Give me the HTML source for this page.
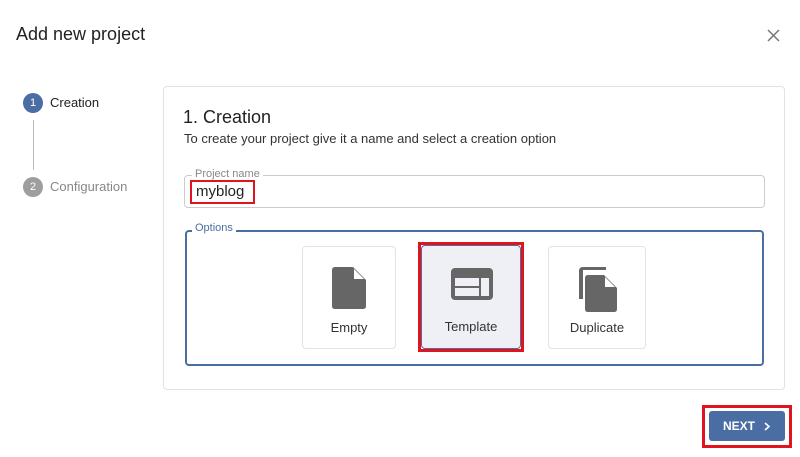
<!DOCTYPE html>
<html><head><style>
*{box-sizing:border-box;margin:0;padding:0}
body{width:800px;height:457px;background:#fff;font-family:"Liberation Sans",sans-serif;position:relative;overflow:hidden;color:#222}
.a{position:absolute}
.opt{position:absolute;top:246px;width:94px;height:103px;border:1px solid #e3e3e3;border-radius:4px;background:#fff}
.opt .lbl{position:absolute;top:73px;left:0;right:0;text-align:center;font-size:13px;color:#333}
.opt svg{position:absolute;left:27px;top:18px}
</style></head><body>
<div class="a" style="left:16px;top:24px;font-size:18px;color:#222">Add new project</div>
<svg class="a" style="left:767px;top:29px" width="13" height="13"><path d="M1 1L12 12M12 1L1 12" stroke="#777" stroke-width="1.5"/></svg>

<div class="a" style="left:23px;top:93px;width:20px;height:20px;border-radius:50%;background:#4a6ea3;color:#fff;font-size:11px;text-align:center;line-height:20px">1</div>
<div class="a" style="left:50px;top:95px;font-size:13px;color:#222">Creation</div>
<div class="a" style="left:33px;top:120px;width:1px;height:50px;background:#bbb"></div>
<div class="a" style="left:23px;top:177px;width:20px;height:20px;border-radius:50%;background:#9e9e9e;color:#fff;font-size:11px;text-align:center;line-height:20px">2</div>
<div class="a" style="left:50px;top:179px;font-size:13px;color:#888">Configuration</div>

<div class="a" style="left:163px;top:86px;width:622px;height:304px;border:1px solid #e2e2e2;border-radius:4px"></div>
<div class="a" style="left:183px;top:107px;font-size:18px;color:#222">1. Creation</div>
<div class="a" style="left:184px;top:131px;font-size:13px;color:#333">To create your project give it a name and select a creation option</div>

<div class="a" style="left:184px;top:175px;width:581px;height:33px;border:1px solid #ccc;border-radius:4px"></div>
<div class="a" style="left:192px;top:168px;font-size:11px;color:#888;background:#fff;padding:0 3px">Project name</div>
<div class="a" style="left:190px;top:180px;width:65px;height:24px;border:2px solid #e0141e"></div>
<div class="a" style="left:196px;top:183px;font-size:15px;color:#222">myblog</div>

<div class="a" style="left:185px;top:230px;width:579px;height:136px;border:2px solid #4a6ea3;border-radius:4px"></div>
<div class="a" style="left:192px;top:222px;font-size:11px;color:#4a6ea3;background:#fff;padding:0 3px">Options</div>

<div class="opt" style="left:302px"><svg width="40" height="46" viewBox="0 0 40 46"><path d="M5 2H23L36 15V41Q36 44 33 44H5Q2 44 2 41V5Q2 2 5 2Z" fill="#666"/><path d="M24 4L34 14H24Z" fill="#fff"/></svg><div class="lbl">Empty</div></div>
<div class="a" style="left:418px;top:242px;width:106px;height:110px;border:3px solid #e0141e"></div>
<div class="opt" style="left:421px;top:245px;width:100px;height:104px;background:#eef0f5;border-color:#4a6ea3"><svg style="left:28px;top:20px" width="44" height="36" viewBox="0 0 44 36"><rect x="1" y="2" width="42" height="32" rx="4" fill="#666"/><rect x="5" y="12" width="24" height="8" fill="#eef0f5"/><rect x="5" y="22" width="24" height="8" fill="#eef0f5"/><rect x="31" y="12" width="8" height="18" fill="#eef0f5"/></svg><div class="lbl">Template</div></div>
<div class="opt" style="left:548px;width:98px"><svg width="44" height="48" viewBox="0 0 44 48"><path d="M3 6Q3 2 7 2H30V5H7V34H3Z" fill="#666"/><path d="M12 10H28L41 23V44Q41 47 38 47H12Q9 47 9 44V13Q9 10 12 10Z" fill="#666"/><path d="M29 12L39 22H29Z" fill="#fff"/></svg><div class="lbl">Duplicate</div></div>

<div class="a" style="left:702px;top:405px;width:90px;height:43px;border:3px solid #e0141e"></div>
<div class="a" style="left:709px;top:411px;width:76px;height:30px;background:#4a6ea3;border-radius:3px;color:#fff;font-size:12px;font-weight:bold;line-height:30px;padding-left:14px">NEXT<svg style="position:absolute;left:55px;top:11px" width="7" height="9"><path d="M1 1L5 4.5L1 8" stroke="#fff" stroke-width="1.6" fill="none"/></svg></div>
</body></html>
